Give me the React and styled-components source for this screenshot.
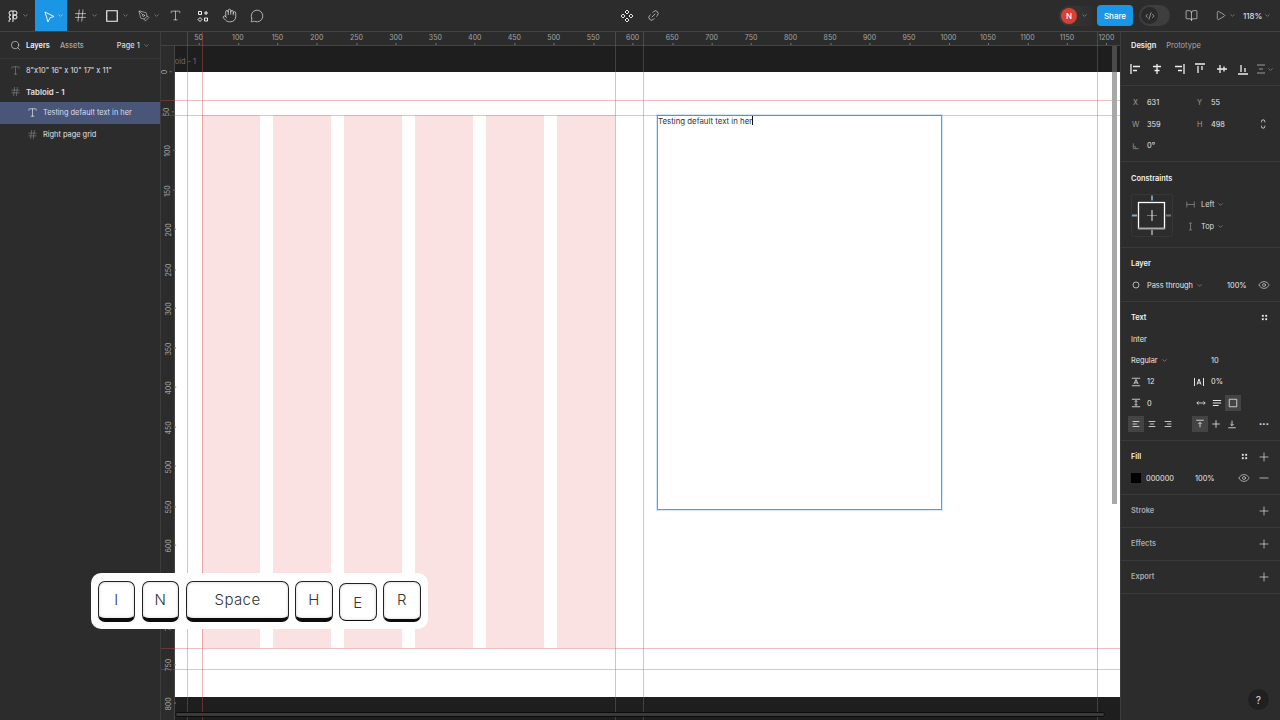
import React from "react";
import styled, { createGlobalStyle } from "styled-components";
import {
  Search, Hash, Type, Hand, MessageCircle, Link2, BookOpen, Play, ChevronDown,
  Eye, Plus, Minus, CodeXml, PenTool,
} from "lucide-react";

const Global = createGlobalStyle`
  html, body { margin: 0; padding: 0; width: 1280px; height: 720px; overflow: hidden; background: #2c2c2c; }
  * { box-sizing: border-box; }
  body { font-family: Inter, "Liberation Sans", sans-serif; font-size: 7.4px; color: #e6e6e6; }
`;

const Shell = styled.div`
  width: 1280px; height: 720px; display: flex; flex-direction: column; position: relative; overflow: hidden;
`;
const Toolbar = styled.header`
  height: 32px; flex: none; display: grid; grid-template-columns: 1fr auto 1fr; align-items: stretch;
  background: #2c2c2c; border-bottom: 1px solid #444;
`;
const ToolGroup = styled.div`
  display: flex; align-items: center; justify-content: ${(p) => p.$end ? "flex-end" : "flex-start"};
  gap: ${(p) => p.$gap || 0}px; padding-right: ${(p) => p.$pr || 0}px;
`;
const Tool = styled.div`
  width: ${(p) => p.$w}px; height: 31px; flex: none; display: flex; align-items: center; justify-content: center; gap: 3px;
  padding-left: ${(p) => p.$pl || 0}px;
  background: ${(p) => p.$active ? "#1b96e6" : "transparent"}; color: #f2f2f2;
`;
const Avatar = styled.div`
  width: 16px; height: 16px; border-radius: 50%; background: #d9402f; color: #fff; font-size: 8px; font-weight: 500;
  display: flex; align-items: center; justify-content: center;
`;
const AvatarPill = styled.div`
  width: 33px; height: 20px; border-radius: 10px 0 0 10px; display: flex; align-items: center; gap: 4px; padding-left: 2px; margin-right: 5px;
  background: linear-gradient(90deg, #3a3a3a, #2e2e2e);
`;
const ShareBtn = styled.div`
  width: 36px; height: 21px; border-radius: 4px; background: #1b96e6; color: #fff; font-size: 8px; font-weight: 500;
  display: flex; align-items: center; justify-content: center;
`;
const CodeToggle = styled.div`
  width: 31px; height: 21px; margin-left: 6px; border-radius: 11px; background: #3e3e3e; padding: 2px; display: flex;
`;
const CodeKnob = styled.div`
  width: 17px; height: 17px; border-radius: 50%; background: #2a2a2a; color: #eee; display: flex; align-items: center; justify-content: center;
`;
const ZoomLabel = styled.div`
  font-size: 8px; color: #eee; display: flex; align-items: center; gap: 2px; margin-left: 6px; width: 30px;
`;

const Main = styled.div`flex: 1; display: flex; min-height: 0;`;
const LeftPanel = styled.aside`
  width: 161px; flex: none; background: #2c2c2c; border-right: 1px solid #3c3c3c; display: flex; flex-direction: column;
`;
const PanelHead = styled.div`
  height: 27px; display: flex; align-items: center; padding-left: 10px; border-bottom: 1px solid #363636; color: #e6e6e6;
`;
const HeadTab = styled.span`
  font-size: 7.4px; font-weight: ${(p) => p.$on ? 600 : 500}; color: ${(p) => p.$on ? "#f0f0f0" : "#a8a8a8"};
  margin-left: ${(p) => p.$ml}px;
`;
const PageMenu = styled.span`
  margin-left: 33px; font-size: 7.4px; font-weight: 500; display: inline-flex; align-items: center; gap: 3px; color: #ddd;
`;
const LayerList = styled.div`padding-top: 0.6px;`;
const LayerRow = styled.div`
  height: 21.33px; display: flex; align-items: center; gap: 5px; padding-left: ${(p) => p.$nested ? 27 : 10}px;
  background: ${(p) => p.$selected ? "#4a5678" : "transparent"};
  font-size: ${(p) => p.$bold ? 7.8 : 7.4}px; font-weight: ${(p) => p.$bold ? 600 : 400}; color: ${(p) => p.$selected ? "#d8deee" : "#e2e2e2"};
  white-space: nowrap;
  svg { color: ${(p) => p.$selected ? "#fff" : "#999"}; flex: none; }
`;

const CanvasArea = styled.main`flex: 1; min-width: 0; display: flex; flex-direction: column; position: relative; background: #1e1e1e;`;
const TopRuler = styled.div`
  height: 14px; flex: none; position: relative; background: #2c2c2c; border-bottom: 1px solid #444;
`;
const RulerLabel = styled.span`
  position: absolute; top: 1px; transform: translateX(-50%); font-size: 7px; line-height: 9px; color: #a4a4a4;
  &::after { content: ""; position: absolute; left: 50%; top: 10px; width: 1px; height: 2px; background: #777; }
`;
const Stage = styled.div`flex: 1; display: flex; min-height: 0;`;
const LeftRuler = styled.div`
  width: 14px; flex: none; position: relative; background: #2c2c2c; border-right: 1px solid #444; z-index: 2;
`;
const VLabel = styled.span`
  position: absolute; left: 1px; font-size: 7px; line-height: 9px; color: #a4a4a4; transform: translateY(-50%) rotate(-90deg);
  &::after { content: ""; position: absolute; left: 50%; top: 10px; width: 1px; height: 2px; background: #777; }
`;
const Viewport = styled.div`flex: 1; position: relative; overflow: hidden; background: #1e1e1e;`;
const PageTitle = styled.span`
  position: absolute; left: -15px; top: 11px; font-size: 7.4px; color: #6f6f6f; white-space: nowrap;
`;
const Page = styled.div`
  position: absolute; left: 0; right: 0; top: 26px; height: 625px; background: #fff;
`;
const GridColumns = styled.div`
  position: absolute; left: 27px; top: 43px; height: 533px; display: flex; gap: 13px;
`;
const GridColumn = styled.div`width: 58px; background: #fbe2e2;`;
const TextFrame = styled.div`
  position: absolute; left: 482px; top: 43px; width: 285px; height: 395px; border: 1px solid #49a6ee; padding: 0;
  box-shadow: 0 0 0 1px rgba(120, 190, 240, 0.35);
  font-size: 7.85px; line-height: 10px; color: #333; white-space: nowrap;
`;
const Caret = styled.span`display: inline-block; width: 1px; height: 9px; background: #111; vertical-align: -1px;`;
const VGuide = styled.div`
  position: absolute; top: 0; bottom: 0; width: 1px; background: rgba(205, 80, 80, 0.4); z-index: 3; pointer-events: none;
`;
const HGuide = styled.div`
  position: absolute; left: 0; right: 0; height: 1px; background: rgba(205, 80, 80, 0.36); z-index: 3; pointer-events: none;
`;
const VScroll = styled.div`
  position: absolute; right: 3px; top: 0; width: 5px; height: 458px; z-index: 4;
  background: linear-gradient(#4a4a4a 0 26px, #a8a8a8 26px);
`;
const HScroll = styled.div`
  position: absolute; left: 0; right: 15px; bottom: 3px; height: 5px; background: #3a3a3a; border: 1px solid #0c0c0c; border-radius: 3px; z-index: 4;
`;

const RightPanel = styled.aside`width: 160px; flex: none; background: #2c2c2c; border-left: 1px solid #3c3c3c;`;
const Section = styled.section`
  padding: ${(p) => p.$first ? 6.33 : 5.33}px 0 ${(p) => p.$tall ? 5.33 : 4.83}px; border-bottom: 1px solid #3a3a3a;
`;
const Tabs = styled.div`
  height: 54px; padding: 0 0 0 10px; border-bottom: 1px solid #3a3a3a; display: flex; flex-direction: column;
`;
const TabRow = styled.div`height: 26px; display: flex; align-items: center; gap: 10px;`;
const TabLabel = styled.span`font-size: 7.5px; font-weight: ${(p) => p.$on ? 600 : 400}; color: ${(p) => p.$on ? "#f0f0f0" : "#a8a8a8"};`;
const AlignRow = styled.div`display: flex; height: 22px; align-items: center; margin-left: -6px; color: #eee;`;
const AlignSlot = styled.span`width: 21.5px; display: flex; align-items: center; justify-content: center; color: ${(p) => p.$dim ? "#999" : "#eee"};`;
const Row = styled.div`
  height: 21.33px; display: flex; align-items: center; padding: 0 8px 0 ${(p) => p.$pl ?? 10}px; font-size: 7.4px; color: #e6e6e6;
`;
const Slot = styled.span`
  width: ${(p) => p.$w}px; height: 16px; flex: none; display: flex; align-items: center;
  justify-content: ${(p) => p.$center ? "center" : "flex-start"}; white-space: nowrap;
  background: ${(p) => p.$on ? "#444" : "transparent"};
  margin-left: ${(p) => p.$auto ? "auto" : "0"}; margin-right: ${(p) => p.$mr || 0}px;
  color: ${(p) => p.$dim ? "#9c9c9c" : "inherit"}; padding-left: ${(p) => p.$pl || 0}px;
`;
const MoreDots = styled.span`font-size: 5.5px; letter-spacing: 0.3px; color: #e0e0e0;`;
const Title = styled.span`font-size: 7.4px; font-weight: 600; color: ${(p) => p.$dim ? "#aaa" : "#f2f2f2"};`;
const Spacer = styled.span`width: ${(p) => p.$w}px; flex: none;`;
const Swatch = styled.span`width: 10px; height: 10px; background: #000; display: block;`;
const ConstraintBody = styled.div`height: 53.33px; display: flex; align-items: center; padding-left: 10px;`;
const ConstraintOptions = styled.div`margin-left: 13px; flex: 1;`;
const OptionRow = styled.div`
  height: 21.33px; display: flex; align-items: center; gap: 6px; font-size: 7.4px; color: #ddd;
  svg:first-child { color: #8c8c8c; }
`;
const Inline = styled.span`display: inline-flex; align-items: center; gap: 3px;`;
const Help = styled.div`
  position: absolute; left: 1248px; top: 689px; width: 21px; height: 21px; border-radius: 50%; background: #202020; color: #c8c8c8;
  font-size: 10px; display: flex; align-items: center; justify-content: center; font-weight: 500;
`;

const KeyTray = styled.div`
  position: absolute; left: 91px; top: 573px; width: 337px; height: 56px; background: #fff; border-radius: 10px;
  display: flex; gap: 7px; padding: 8px 7px; z-index: 10;
`;
const Key = styled.div`
  width: ${(p) => p.$w}px; height: ${(p) => p.$pressed ? 38 : 41}px; margin-top: ${(p) => p.$pressed ? 2 : 0}px; flex: none;
  margin-left: ${(p) => p.$tight ? -1 : 0}px;
  border: 1px solid #222; border-bottom: ${(p) => p.$pressed ? 1 : p.$low ? 3 : 4}px solid #0c0c0c; border-radius: 7px;
  background: #fff; box-shadow: inset 0 0 3px #ccc;
  display: flex; align-items: center; justify-content: center; padding-bottom: ${(p) => p.$pressed ? 0 : 2}px;
  font-size: 15px; font-weight: 300; color: #333; letter-spacing: 0.4px;
`;

const P = {
  alignL: "M1 1v10M3 3.500h7M3 7.500h4",
  alignC: "M6 1v10M2 3.500h8M3.500 7.500h5",
  alignR: "M11 1v10M2 3.500h7M5 7.500h4",
  alignT: "M1 1h10M4 3v7M8 3v4",
  alignM: "M1 6h10M4 2v8M8 3.500v5",
  alignB: "M1 11h10M4 2v7M8 5v4",
  dist: "M2 2h8M2 10h8M4 6h4",
  pointer: "M3 2l9 4.500-4 1.300L6 12z",
  comps: "M1.500 1.500h3v3h-3zM9 1v4M7 3h4M3 7.500L5 9.500 3 11.500 1 9.500zM7.500 8h3v3h-3z",
  figma: "M6 1H4a2 2 0 000 4 2 2 0 000 4 2 2 0 102 2V1h2a2 2 0 010 4H6m2 0a2 2 0 110 4 2 2 0 010-4",
  diamonds: "M7 1l2 2-2 2-2-2zM3 5l2 2-2 2-2-2zM11 5l2 2-2 2-2-2zM7 9l2 2-2 2-2-2z",
  angle: "M2 2v8h8M2 6a4 4 0 014 4",
  cornerLink: "M3 4V3a2 2 0 014 0v1M3 8v1a2 2 0 004 0V8",
  blend: "M6 1.500a4 4 0 100 9 4 4 0 000-9z",
  lineH: "M1 1.500h10M1 10.500h10M3.500 8.500L6 3l2.500 5.500M4.500 7h3",
  letter: "M1.500 2v8M10.500 2v8M4 8.500L6 3l2 5.500M4.700 7h2.600",
  paraS: "M1 1.500h10M1 10.500h10M6 3v6M4.500 4.500L6 3l1.500 1.500M4.500 7.500L6 9l1.500-1.500",
  width: "M1 6h10M3 4L1 6l2 2M9 4l2 2-2 2",
  lines: "M1 3h10M1 6h10M1 9h7",
  box: "M1.500 1.500h9v9h-9z",
  tL: "M2 3h8M2 6h5M2 9h8",
  tC: "M2 3h8M3.500 6h5M2 9h8",
  tR: "M2 3h8M5 6h5M2 9h8",
  vT: "M1.500 1.500h9M6 10V4M4 6l2-2 2 2",
  vM: "M1.500 6h9M6 1.500v9",
  vB: "M1.500 10.500h9M6 2v6M4 6l2 2 2-2",
  hW: "M1 2v8M11 2v8M1 6h10",
  hH: "M4 1.500h4M4 10.500h4M6 1.500v9",
};
const Glyph = styled.svg.attrs((p) => ({ viewBox: `0 0 ${p.$vb || 12} ${p.$vb || 12}`, fill: "none", stroke: "currentColor" }))`
  width: ${(p) => p.$s || 12}px; height: ${(p) => p.$s || 12}px; flex: none; stroke-width: ${(p) => p.$sw || 1};
`;
const G = ({ n, s, sw, vb }) => <Glyph $s={s} $sw={sw} $vb={vb}><path d={P[n]} /></Glyph>;
const Dots = () => (
  <Glyph $s={9}><g fill="currentColor" stroke="none"><rect x="2.500" y="2.500" width="2.500" height="2.500" /><rect x="7" y="2.500" width="2.500" height="2.500" /><rect x="2.500" y="7" width="2.500" height="2.500" /><rect x="7" y="7" width="2.500" height="2.500" /></g></Glyph>
);
const Chev = ({ c }) => <ChevronDown size={7} strokeWidth={1.5} color={c || "#c4c4c4"} />;

const ConstraintBox = () => (
  <svg width="42" height="43" viewBox="0 0 42 43">
    <rect x="0.5" y="0.5" width="41" height="42" rx="2" fill="none" stroke="#363636" />
    <rect x="7.500" y="8.500" width="26" height="26" fill="none" stroke="#fff" strokeWidth="1.3" />
    <path d="M7 34.500h27" stroke="#aaa" strokeWidth="1.6" />
    <path d="M16 21.500h10" stroke="#777" />
    <path d="M21 16v11" stroke="#eee" />
    <path d="M21 1.500v5" stroke="#7a9ab0" strokeWidth="2" />
    <path d="M21 36v5" stroke="#eee" />
    <path d="M1 21.500h5" stroke="#8aa8be" strokeWidth="2" />
    <path d="M35 21.500h5" stroke="#777" strokeWidth="2" />
  </svg>
);

const topTicks = Array.from({ length: 24 }, (_, i) => (i + 1) * 50);
const leftTicks = Array.from({ length: 17 }, (_, i) => i * 50);
const vGuides = [26, 41, 454, 482, 936];
const hGuides = [68, 83, 616, 637];

export default function App() {
  return (
    <Shell>
      <Global />
      <Toolbar>
        <ToolGroup>
          <Tool $w={35}><G n="figma" s={12} /><Chev /></Tool>
          <Tool $w={32} $active $pl={3}><G n="pointer" s={12} /><Chev c="#fff" /></Tool>
          <Tool $w={32} $pl={5}><Hash size={15} strokeWidth={1} /><Chev /></Tool>
          <Tool $w={32} $pl={3}><G n="box" s={14} sw={1} /><Chev /></Tool>
          <Tool $w={31} $pl={5}><PenTool size={12} strokeWidth={1} /><Chev /></Tool>
          <Tool $w={27}><Type size={13} strokeWidth={1.1} /></Tool>
          <Tool $w={27}><G n="comps" s={12} /></Tool>
          <Tool $w={27}><Hand size={15} strokeWidth={1.1} /></Tool>
          <Tool $w={27}><MessageCircle size={14} strokeWidth={1.1} /></Tool>
        </ToolGroup>
        <ToolGroup $gap={13}>
          <G n="diamonds" s={14} vb={14} />
          <Link2 size={13} strokeWidth={1.2} style={{ transform: "rotate(-45deg)" }} />
        </ToolGroup>
        <ToolGroup $end $pr={7}>
          <AvatarPill><Avatar>N</Avatar><Chev /></AvatarPill>
          <ShareBtn>Share</ShareBtn>
          <CodeToggle><CodeKnob><CodeXml size={10} strokeWidth={1.2} /></CodeKnob></CodeToggle>
          <Tool $w={43}><BookOpen size={13} strokeWidth={1.1} /></Tool>
          <Tool $w={24}><Play size={11} strokeWidth={1.2} /><Chev /></Tool>
          <ZoomLabel>118%<Chev /></ZoomLabel>
        </ToolGroup>
      </Toolbar>
      <Main>
        <LeftPanel>
          <PanelHead>
            <Search size={11} strokeWidth={1.3} />
            <HeadTab $on $ml={5}>Layers</HeadTab>
            <HeadTab $ml={10}>Assets</HeadTab>
            <PageMenu>Page 1 <Chev /></PageMenu>
          </PanelHead>
          <LayerList>
            <LayerRow><Type size={11} strokeWidth={1.1} />8"x10" 16" x 10" 17" x 11"</LayerRow>
            <LayerRow $bold><Hash size={11} strokeWidth={1.1} />Tabloid - 1</LayerRow>
            <LayerRow $nested $selected><Type size={11} strokeWidth={1.3} />Testing default text in her</LayerRow>
            <LayerRow $nested><Hash size={11} strokeWidth={1.1} />Right page grid</LayerRow>
          </LayerList>
        </LeftPanel>
        <CanvasArea>
          <TopRuler>
            {topTicks.map((t) => <RulerLabel key={t} style={{ left: -2 + t * 0.7895 }}>{t}</RulerLabel>)}
          </TopRuler>
          <Stage>
            <LeftRuler>
              {leftTicks.map((t) => <VLabel key={t} style={{ top: 26 + t * 0.79 }}>{t}</VLabel>)}
            </LeftRuler>
            <Viewport>
              <PageTitle>Tabloid - 1</PageTitle>
              <Page>
                <GridColumns>
                  {[0, 1, 2, 3, 4, 5].map((c) => <GridColumn key={c} />)}
                </GridColumns>
                <TextFrame>Testing default text in her<Caret /></TextFrame>
              </Page>
              <VScroll />
              <HScroll />
            </Viewport>
          </Stage>
          {vGuides.map((x) => <VGuide key={x} style={{ left: x }} />)}
          {hGuides.map((y) => <HGuide key={y} style={{ top: y }} />)}
        </CanvasArea>
        <RightPanel>
          <Tabs>
            <TabRow><TabLabel $on>Design</TabLabel><TabLabel>Prototype</TabLabel></TabRow>
            <AlignRow>
              <AlignSlot><G n="alignL" sw={1.3} /></AlignSlot>
              <AlignSlot><G n="alignC" sw={1.3} /></AlignSlot>
              <AlignSlot><G n="alignR" sw={1.3} /></AlignSlot>
              <AlignSlot><G n="alignT" sw={1.3} /></AlignSlot>
              <AlignSlot><G n="alignM" sw={1.3} /></AlignSlot>
              <AlignSlot><G n="alignB" sw={1.3} /></AlignSlot>
              <AlignSlot $dim><G n="dist" /><Chev /></AlignSlot>
            </AlignRow>
          </Tabs>
          <Section $first>
            <Row><Slot $w={16} $dim $pl={2}>X</Slot><Slot $w={50}>631</Slot><Slot $w={14} $dim>Y</Slot><Slot $w={40}>55</Slot></Row>
            <Row><Slot $w={16} $dim $pl={1}>W</Slot><Slot $w={50}>359</Slot><Slot $w={14} $dim>H</Slot><Slot $w={40}>498</Slot><Slot $w={16} $auto $center><G n="cornerLink" s={10} /></Slot></Row>
            <Row><Slot $w={16} $dim $pl={1}><G n="angle" s={8} /></Slot><Slot $w={50}>0°</Slot></Row>
          </Section>
          <Section>
            <Row><Title>Constraints</Title></Row>
            <ConstraintBody>
              <ConstraintBox />
              <ConstraintOptions>
                <OptionRow><G n="hW" s={9} /><Inline>Left <Chev /></Inline></OptionRow>
                <OptionRow><G n="hH" s={9} /><Inline>Top <Chev /></Inline></OptionRow>
              </ConstraintOptions>
            </ConstraintBody>
          </Section>
          <Section>
            <Row><Title>Layer</Title></Row>
            <Row>
              <Slot $w={16} $pl={1}><G n="blend" s={8} sw={1.1} /></Slot>
              <Slot $w={80}><Inline>Pass through <Chev /></Inline></Slot>
              <Slot $w={20}>100%</Slot>
              <Slot $w={16} $auto $center><Eye size={12} strokeWidth={1.2} /></Slot>
            </Row>
          </Section>
          <Section>
            <Row><Title>Text</Title><Slot $w={16} $auto $center><Dots /></Slot></Row>
            <Row>Inter</Row>
            <Row><Slot $w={80}><Inline>Regular <Chev /></Inline></Slot>10</Row>
            <Row>
              <Slot $w={16}><G n="lineH" s={10} /></Slot><Slot $w={46}>12</Slot>
              <Slot $w={18}><G n="letter" s={12} /></Slot>0%
            </Row>
            <Row>
              <Slot $w={16}><G n="paraS" s={10} /></Slot><Slot $w={46}>0</Slot>
              <Slot $w={16} $center><G n="width" s={10} /></Slot>
              <Slot $w={16} $center><G n="lines" s={10} sw={1.2} /></Slot>
              <Slot $w={16} $center $on><G n="box" s={10} /></Slot>
            </Row>
            <Row $pl={7}>
              <Slot $w={16} $center $on><G n="tL" s={10} /></Slot>
              <Slot $w={16} $center><G n="tC" s={10} /></Slot>
              <Slot $w={16} $center><G n="tR" s={10} /></Slot>
              <Spacer $w={16} />
              <Slot $w={16} $center $on><G n="vT" s={10} /></Slot>
              <Slot $w={16} $center><G n="vM" s={10} /></Slot>
              <Slot $w={16} $center><G n="vB" s={10} /></Slot>
              <Slot $w={16} $auto $center><MoreDots>•••</MoreDots></Slot>
            </Row>
          </Section>
          <Section>
            <Row><Title>Fill</Title><Slot $w={16} $auto $mr={4} $center><Dots /></Slot><Slot $w={16} $center><Plus size={14} strokeWidth={1.1} color="#f0f0f0" /></Slot></Row>
            <Row>
              <Slot $w={15}><Swatch /></Slot><Slot $w={49}>000000</Slot><Slot $w={30}>100%</Slot>
              <Slot $w={16} $auto $mr={4} $center><Eye size={12} strokeWidth={1.2} /></Slot>
              <Slot $w={16} $center><Minus size={14} strokeWidth={1.1} color="#f0f0f0" /></Slot>
            </Row>
          </Section>
          {["Stroke", "Effects", "Export"].map((s) => (
            <Section key={s} $tall>
              <Row><Title $dim>{s}</Title><Slot $w={16} $auto $center><Plus size={14} strokeWidth={1.1} color="#f0f0f0" /></Slot></Row>
            </Section>
          ))}
        </RightPanel>
      </Main>
      <KeyTray>
        <Key $w={37}>I</Key>
        <Key $w={37}>N</Key>
        <Key $w={103}>Space</Key>
        <Key $w={38} $tight>H</Key>
        <Key $w={38} $tight $pressed>E</Key>
        <Key $w={38} $tight $low>R</Key>
      </KeyTray>
      <Help>?</Help>
    </Shell>
  );
}
